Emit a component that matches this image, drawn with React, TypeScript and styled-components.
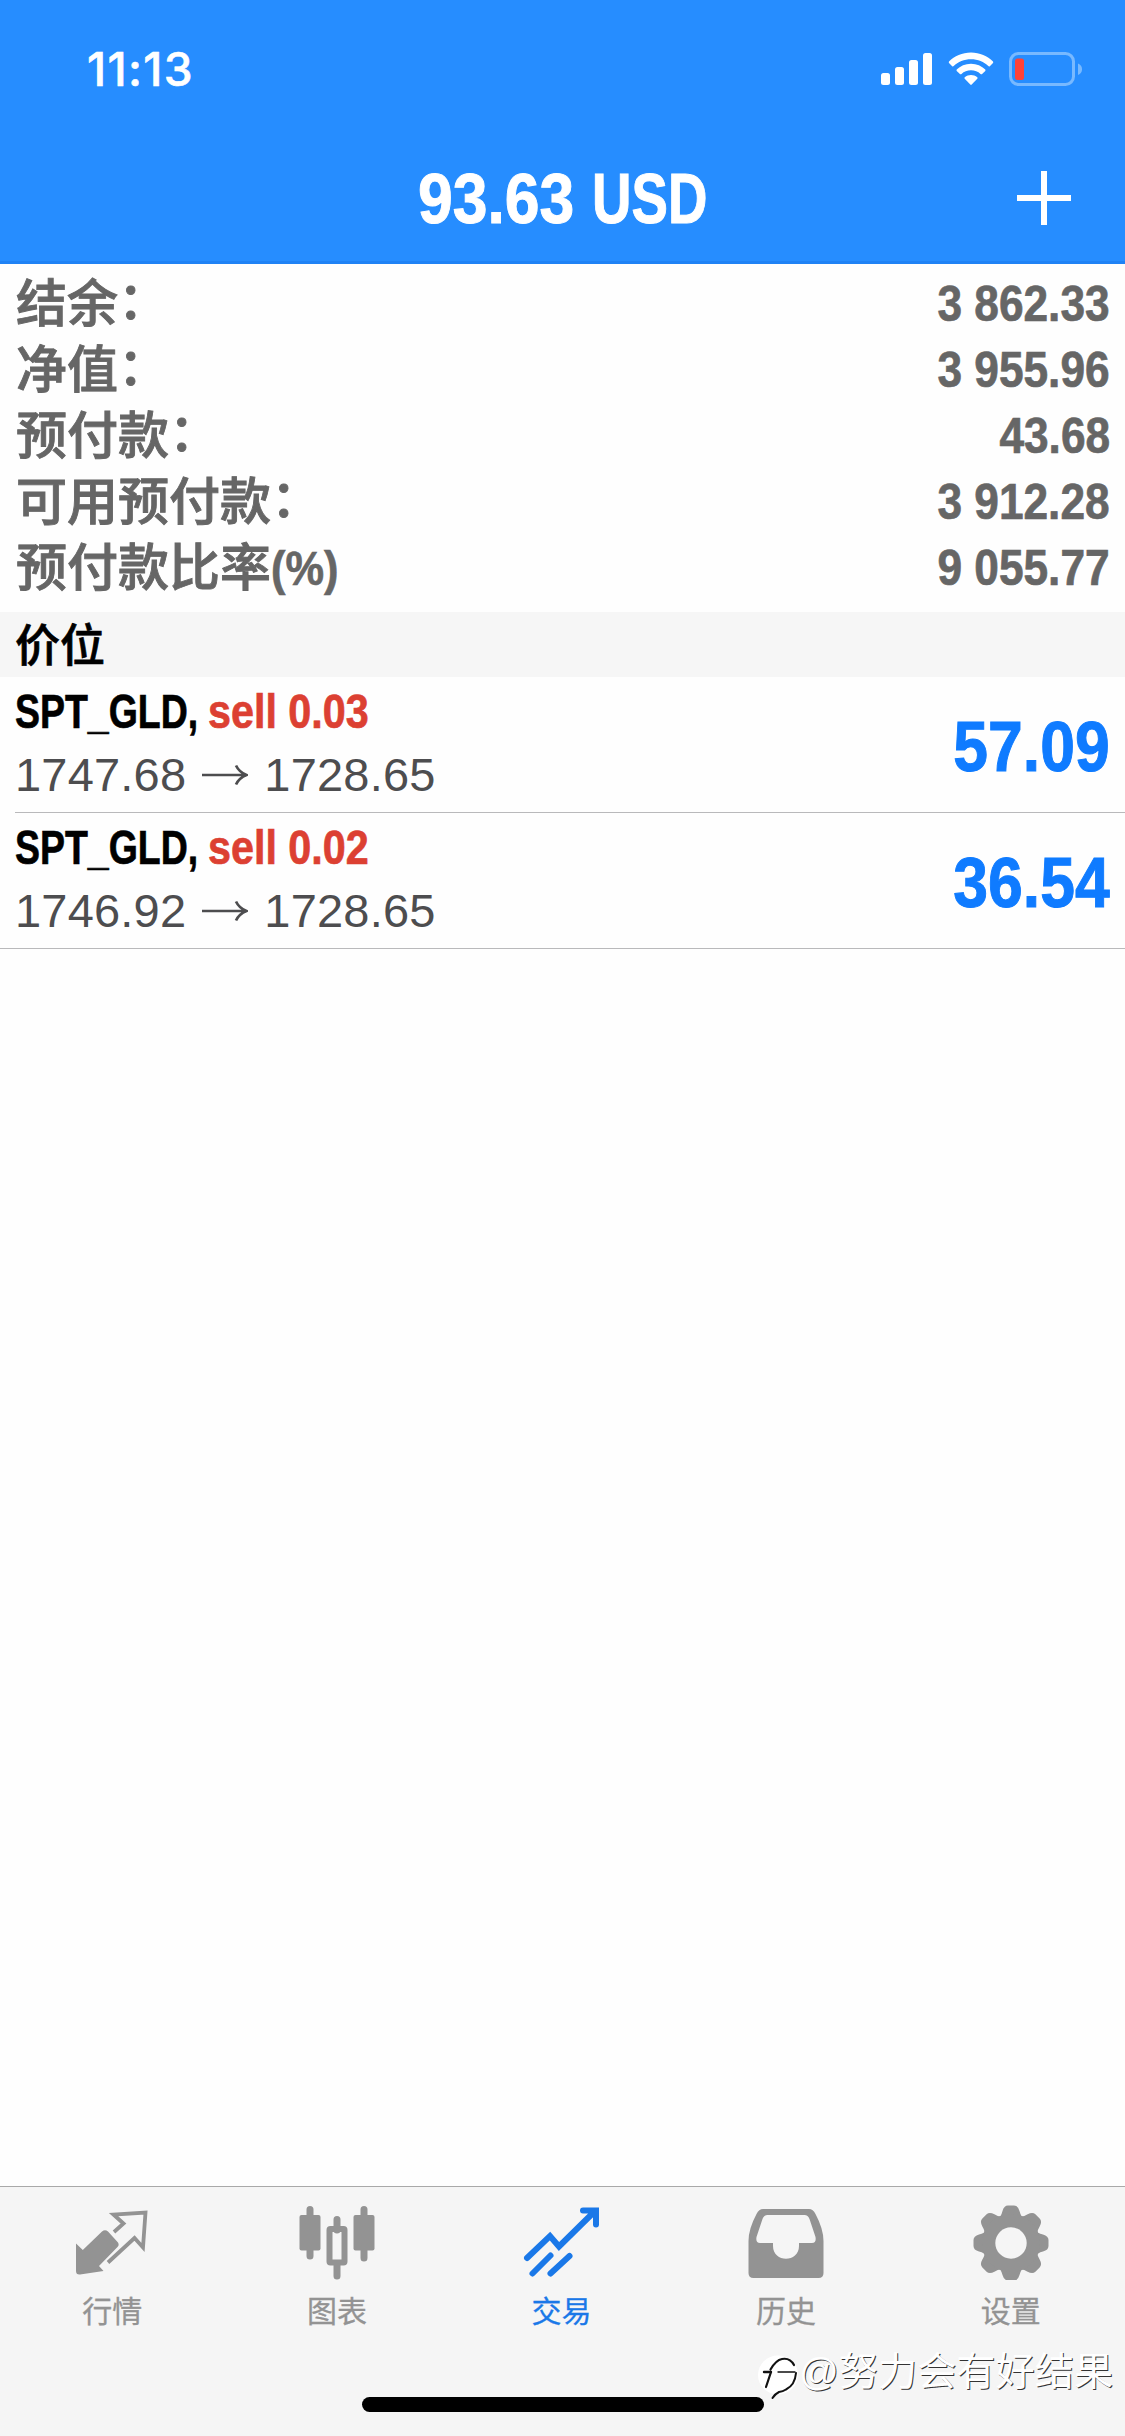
import React from "react";
import styled, { createGlobalStyle } from "styled-components";

const Global = createGlobalStyle`
  * { box-sizing: border-box; }
  html, body { margin: 0; background: #fefefe; }
  svg { display: block; flex: none; }
`;

const sans = `"Liberation Sans", "Noto Sans CJK SC", sans-serif`;

const Screen = styled.div`
  width: 1125px;
  height: 2436px;
  display: flex;
  flex-direction: column;
  background: #fefefe;
  font-family: ${sans};
  overflow: hidden;
`;

const Header = styled.header`
  height: 264px;
  flex: none;
  background: #268dff;
  border-bottom: 3px solid #1f82f5;
  color: #fff;
`;

const StatusBar = styled.div`
  height: 138px;
  display: flex;
  align-items: center;
  justify-content: space-between;
  padding: 0 42px 0 87px;
`;

const Clock = styled.span`
  font: 500 46px/52px Inter, sans-serif;
  letter-spacing: 1.4px;
  -webkit-text-stroke: 0.6px #fff;
`;

const StatusIcons = styled.div`
  display: flex;
  align-items: center;
  gap: 15px;
`;

const TitleBar = styled.div`
  height: 122px;
  display: grid;
  grid-template-columns: 1fr auto 1fr;
  align-items: center;
  padding: 0 54px;
`;

const Title = styled.h1`
  display: flex;
  justify-content: center;
  margin: 0;
  width: 290px;
  gap: 17px;
`;

const TitlePart = styled.span<{ $width: number }>`
  width: ${(p) => p.$width}px;
  white-space: nowrap;
`;

const Condensed = styled.span<{ $size: number; $scale: number; $origin?: string; $color?: string }>`
  display: inline-block;
  font-family: ${sans};
  font-weight: 700;
  font-size: ${(p) => p.$size}px;
  line-height: 1.2;
  white-space: pre;
  color: ${(p) => p.$color ?? "inherit"};
  -webkit-text-stroke: ${(p) => p.$size / 70}px currentColor;
  transform: scaleX(${(p) => p.$scale});
  transform-origin: ${(p) => p.$origin ?? "left"} center;
`;

const AddButton = styled.button`
  justify-self: end;
  padding: 0 0 2px;
  border: 0;
  background: none;
`;

const Summary = styled.section`
  height: 348px;
  flex: none;
  padding: 7px 15px 0 16px;
  color: #666;
`;

const SummaryRow = styled.div`
  height: 66px;
  display: flex;
  align-items: center;
  justify-content: space-between;
`;

const Label = styled.span`
  padding-top: 2px;
  font: 500 51px/66px ${sans};
  -webkit-text-stroke: 0.9px currentColor;
  white-space: nowrap;
`;

const Colon = styled.span`
  line-height: 0;
  vertical-align: 3px;
`;

const Unit = styled.span`
  line-height: 0;
  vertical-align: 1px;
`;

const SectionTitle = styled.h2`
  height: 65px;
  flex: none;
  margin: 0;
  padding: 2px 15px 0;
  background: #f6f6f6;
  color: #000;
  font: 500 45px/65px ${sans};
  -webkit-text-stroke: 0.7px currentColor;
`;

const Positions = styled.main`
  flex: 1;
`;

const Position = styled.div<{ $last?: boolean }>`
  height: 136px;
  display: flex;
  align-items: center;
  justify-content: space-between;
  margin-left: ${(p) => (p.$last ? 0 : 15)}px;
  padding: 5px 15px 0 ${(p) => (p.$last ? 15 : 0)}px;
  border-bottom: 1px solid #b9b9bb;
`;

const Details = styled.div`
  display: flex;
  flex-direction: column;
  padding-bottom: 6px;
`;

const Order = styled.div`
  height: 62px;
  display: flex;
  align-items: center;
`;

const OrderSymbol = styled.div`
  width: 193px;
  white-space: nowrap;
`;

const Prices = styled.div`
  height: 64px;
  display: flex;
  align-items: center;
  color: #4d4d4f;
  font-size: 47px;
  line-height: 64px;
  letter-spacing: 0.2px;
`;

const Arrow = styled.svg`
  margin: 0 16px;
`;

const Footer = styled.footer`
  position: relative;
  height: 250px;
  flex: none;
  display: flex;
  flex-direction: column;
  justify-content: space-between;
  align-items: center;
  background: #f5f5f5;
  border-top: 1px solid #a9a9a9;
`;

const Tabs = styled.nav`
  width: 1125px;
  padding-right: 2px;
  display: grid;
  grid-template-columns: repeat(5, 1fr);
`;

const Tab = styled.div<{ $active?: boolean }>`
  display: flex;
  flex-direction: column;
  align-items: center;
  padding-top: 17px;
  color: ${(p) => (p.$active ? "#1a78e8" : "#939393")};
  font: 400 30px/40px ${sans};
  -webkit-text-stroke: 0.3px currentColor;
  gap: 12px;
`;

const HomeIndicator = styled.div`
  width: 402px;
  height: 15px;
  margin: 0 0 24px 0;
  border-radius: 8px;
  background: #000;
`;

const Watermark = styled.div`
  position: absolute;
  left: 758px;
  top: 162px;
  display: flex;
  align-items: center;
  color: #fff;
`;

const WatermarkText = styled.span`
  padding-bottom: 8px;
  margin-left: -1px;
  font: 400 39.2px/46px ${sans};
  text-shadow: 1px 1px 0 #333;
  white-space: nowrap;
`;

const summary = [
  { label: "结余", colon: true, value: "3 862.33" },
  { label: "净值", colon: true, value: "3 955.96" },
  { label: "预付款", colon: true, value: "43.68" },
  { label: "可用预付款", colon: true, value: "3 912.28" },
  { label: "预付款比率", unit: "(%)", value: "9 055.77" },
];

const positions = [
  { symbol: "SPT_GLD,", side: "sell 0.03", open: "1747.68", now: "1728.65", profit: "57.09" },
  { symbol: "SPT_GLD,", side: "sell 0.02", open: "1746.92", now: "1728.65", profit: "36.54" },
];

const Signal = () => (
  <svg width="52" height="33" viewBox="0 0 52 33" fill="#fff">
    <rect x="0" y="20" width="9" height="12" rx="2.5" />
    <rect x="14" y="14" width="9" height="18" rx="2.5" />
    <rect x="28" y="7" width="9" height="25" rx="2.5" />
    <rect x="42" y="0" width="9" height="32" rx="2.5" />
  </svg>
);

const Wifi = () => (
  <svg width="46" height="34" viewBox="0 0 46 34" fill="#fff">
    <path d="M23 .5C31.800 .5 39.600 4 45 9.500Q45.500 10.200 45 11L41.800 14.200Q41 14.700 40.300 14.100C36 9.800 29.800 7.300 23 7.300S10 9.800 5.700 14.100Q5 14.700 4.200 14.200L1 11Q.5 10.200 1 9.500C6.400 4 14.200 .5 23 .5Z" />
    <path d="M23 11.800C28.700 11.800 33.700 14 37.300 17.600Q37.700 18.300 37.300 19L33.800 22.200Q33.100 22.600 32.500 22C30 19.600 26.700 18.300 23 18.300S16 19.600 13.500 22Q12.900 22.600 12.200 22.200L8.700 19Q8.300 18.300 8.700 17.600C12.300 14 17.300 11.800 23 11.800Z" />
    <path d="M23 23C25.300 23 27.500 23.900 29.300 25.300Q29.800 26 29.300 26.700L23.700 32.600Q23 33.200 22.300 32.600L16.700 26.700Q16.200 26 16.700 25.300C18.500 23.900 20.700 23 23 23Z" />
  </svg>
);

const Battery = () => (
  <svg width="74" height="35" viewBox="0 0 74 35">
    <rect x="1.500" y="1.500" width="63" height="31" rx="8" fill="none" stroke="#78b9ff" strokeWidth="3" />
    <path d="M69 11.500Q73 13 73 17.200T69 23Z" fill="#78b9ff" />
    <rect x="6" y="6.500" width="9" height="21.500" rx="2.500" fill="#ff4238" />
  </svg>
);

const QuotesIcon = () => (
  <svg width="76" height="76" viewBox="0 0 76 76">
    <path d="M2 39.500L8.800 46L28 27.500Q31 25 34 27.500L44 38.500Q45.500 41 43.500 43L25 62L29.500 67L6 70.500Q2 70.800 2 67Z" fill="currentColor" />
    <path d="M40 28L49.500 19.500L39.500 10.500L71.500 8.500L69 43.500L60.500 34L34 58.500" fill="none" stroke="currentColor" strokeWidth="3.800" />
  </svg>
);

const ChartIcon = () => (
  <svg width="76" height="76" viewBox="0 0 76 76" fill="none" stroke="currentColor">
    <path d="M11 5.500V52M65 5.500V54M38 15.500V26M38 60V72" strokeWidth="7" strokeLinecap="round" />
    <rect x=".500" y="11" width="21" height="35.500" rx="2" fill="currentColor" stroke="none" />
    <rect x="54.500" y="11" width="21" height="35.500" rx="2" fill="currentColor" stroke="none" />
    <rect x="30.500" y="25" width="15" height="33.500" rx="1" strokeWidth="6" />
  </svg>
);

const TradeIcon = () => (
  <svg width="76" height="76" viewBox="0 0 76 76" fill="none" stroke="currentColor" strokeWidth="6" strokeLinecap="round">
    <path d="M4 54L27 32L36 42.500L71 8M60 6.500H73V20.500" />
    <path d="M9.500 69.500L27.500 51.500M27.500 69.500L46.500 52" />
  </svg>
);

const HistoryIcon = () => (
  <svg width="76" height="76" viewBox="0 0 76 76">
    <path fillRule="evenodd" fill="currentColor" d="M15 5H61Q65 5 67.500 10Q75.500 25 75.500 37V69Q75.500 74 70.500 74H5.500Q.5 74 .5 69V37Q.5 25 8.500 10Q11 5 15 5ZM19.500 11Q16 11 14.500 15L8.500 33Q7.500 39 12 39H25V42C25 59 51 59 51 42V39H64Q68.500 39 67.500 33L61.500 15Q60 11 56.500 11Z" />
  </svg>
);

const GearIcon = () => (
  <svg width="76" height="76" viewBox="0 0 76 76">
    <g fill="currentColor">
      {[0, 45, 90, 135, 180, 225, 270, 315].map((a) => (
        <path key={a} transform={`rotate(${a} 38 39)`} d="M25 14Q28 13 29.500 7Q31 1.500 35 1.500H41Q45 1.500 46.500 7Q48 13 51 14L44 32H32Z" />
      ))}
      <circle cx="38" cy="39" r="29" />
    </g>
    <circle cx="38" cy="39" r="15.700" fill="#f5f5f5" />
  </svg>
);

const WatermarkLogo = () => (
  <svg width="42" height="54" viewBox="0 -6 42 54" fill="none" stroke="#111" strokeLinecap="round">
    <ellipse cx="20" cy="20" rx="20" ry="19.500" fill="#fff" stroke="none" />
    <path d="M6 17H13" strokeWidth="2.400" />
    <path d="M20 17H37" strokeWidth="1.300" />
    <path d="M13 17L8 32M12.500 14.500Q18 5 24 4Q32 2.500 36 10" strokeWidth="2.200" />
    <path d="M38 18Q37 30 28 34.500Q25 36.500 21 37Q17 39 14.500 43" strokeWidth="2" />
  </svg>
);

const tabs = [
  { label: "行情", Icon: QuotesIcon },
  { label: "图表", Icon: ChartIcon },
  { label: "交易", Icon: TradeIcon, active: true },
  { label: "历史", Icon: HistoryIcon },
  { label: "设置", Icon: GearIcon },
];

export default function App() {
  return (
    <>
      <Global />
      <Screen>
        <Header>
          <StatusBar>
            <Clock>11:13</Clock>
            <StatusIcons>
              <Signal />
              <Wifi />
              <Battery />
            </StatusIcons>
          </StatusBar>
          <TitleBar>
            <span />
            <Title>
              <TitlePart $width={157}>
                <Condensed $size={71} $scale={0.88}>93.63</Condensed>
              </TitlePart>
              <TitlePart $width={116}>
                <Condensed $size={71} $scale={0.77}>USD</Condensed>
              </TitlePart>
            </Title>
            <AddButton aria-label="+">
              <svg width="54" height="54" viewBox="0 0 54 54">
                <path d="M27 0V54M0 27H54" stroke="#fff" strokeWidth="6" />
              </svg>
            </AddButton>
          </TitleBar>
        </Header>
        <Summary>
          {summary.map(({ label, colon, unit, value }) => (
            <SummaryRow key={label}>
              <Label>
                {label}
                {colon && <Colon>：</Colon>}
                {unit && (
                  <Unit>
                    <Condensed $size={49} $scale={0.885}>{unit}</Condensed>
                  </Unit>
                )}
              </Label>
              <Condensed $size={50} $scale={0.885} $origin="right">{value}</Condensed>
            </SummaryRow>
          ))}
        </Summary>
        <SectionTitle>价位</SectionTitle>
        <Positions>
          {positions.map((p, i) => (
            <Position key={p.side} $last={i === positions.length - 1}>
              <Details>
                <Order>
                  <OrderSymbol>
                    <Condensed $size={48} $scale={0.78} $color="#000">{p.symbol}</Condensed>
                  </OrderSymbol>
                  <Condensed $size={48} $scale={0.86} $color="#dc4032">{p.side}</Condensed>
                </Order>
                <Prices>
                  {p.open}
                  <Arrow width="46" height="22" viewBox="0 0 46 22" fill="none" stroke="#4d4d4f" strokeWidth="2.700">
                    <path d="M0 11H44M34 1.500Q37 8 44.500 11Q37 14 34 20.500" />
                  </Arrow>
                  {p.now}
                </Prices>
              </Details>
              <Condensed $size={71} $scale={0.88} $origin="right" $color="#0f7bff">{p.profit}</Condensed>
            </Position>
          ))}
        </Positions>
        <Footer>
          <Tabs>
            {tabs.map(({ label, Icon, active }) => (
              <Tab key={label} $active={active}>
                <Icon />
                {label}
              </Tab>
            ))}
          </Tabs>
          <HomeIndicator />
          <Watermark>
            <WatermarkLogo />
            <WatermarkText>@努力会有好结果</WatermarkText>
          </Watermark>
        </Footer>
      </Screen>
    </>
  );
}
